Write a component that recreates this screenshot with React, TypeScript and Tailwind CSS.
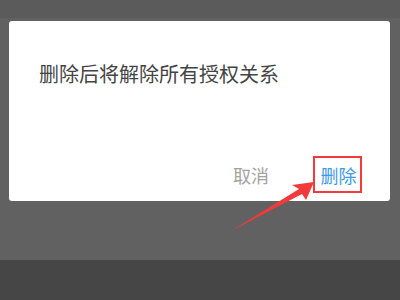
import React from "react";

export default function App() {
  return (
    <div
      className="relative w-[400px] h-[300px] overflow-hidden bg-[#616161] flex flex-col"
      style={{ fontFamily: '"Noto Sans CJK SC", "Noto Sans", sans-serif' }}
    >
      <div className="h-[18px] bg-[#5b5b5b] shrink-0" />
      {/* dialog */}
      <div className="ml-[9px] mt-[3px] w-[381px] h-[180px] bg-white rounded-[3px] flex flex-col">
        <p className="pl-[30px] pt-[39px] text-[20px] leading-[28px] text-[#444444]">
          删除后将解除所有授权关系
        </p>
        <div className="mt-auto mb-[8px] mr-[28px] flex items-center justify-end gap-[44px]">
          <button className="text-[18px] leading-[24px] text-[#a3a3a3]">取消</button>
          <button className="w-[49px] h-[37px] border-2 border-[#f23a3a] flex items-center justify-center pl-[2px] text-[18px] leading-[24px] text-[#3d9ae8]">
            删除
          </button>
        </div>
      </div>
      <div className="mt-auto h-[40px] bg-[#464646] shrink-0" />

      {/* annotation arrow */}
      <svg
        className="absolute left-0 top-0 pointer-events-none"
        width="400"
        height="300"
        viewBox="0 0 400 300"
      >
        <polygon
          points="231,231 299,189 292,185 314,182 306,200 302,194"
          fill="#f23a3a"
        />
      </svg>
    </div>
  );
}
